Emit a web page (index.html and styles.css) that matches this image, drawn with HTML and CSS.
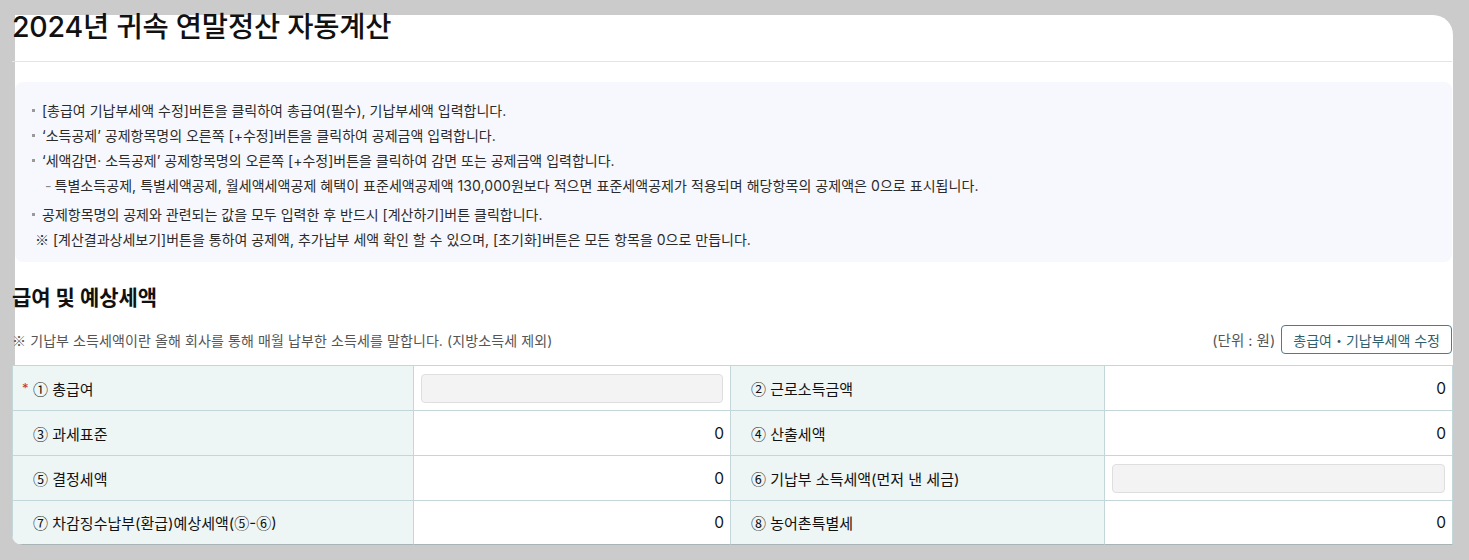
FILE: index.html
```html
<!DOCTYPE html>
<html lang="ko">
<head>
<meta charset="utf-8">
<title>2024년 귀속 연말정산 자동계산</title>
<link rel="stylesheet" href="styles.css">
</head>
<body>
<div class="card">
  <h1 class="title">2024년 귀속 연말정산 자동계산</h1>
  <hr class="rule">
  <div class="info">
    <ul class="guide">
      <li class="b">[총급여 기납부세액 수정]버튼을 클릭하여 총급여(필수), 기납부세액 입력합니다.</li>
      <li class="b">‘소득공제’ 공제항목명의 오른쪽 [+수정]버튼을 클릭하여 공제금액 입력합니다.</li>
      <li class="b">‘세액감면· 소득공제’ 공제항목명의 오른쪽 [+수정]버튼을 클릭하여 감면 또는 공제금액 입력합니다.</li>
      <li class="sub"><span class="dash">-</span>특별소득공제, 특별세액공제, 월세액세액공제 혜택이 표준세액공제액 130,000원보다 적으면 표준세액공제가 적용되며 해당항목의 공제액은 0으로 표시됩니다.</li>
      <li class="b gap">공제항목명의 공제와 관련되는 값을 모두 입력한 후 반드시 [계산하기]버튼 클릭합니다.</li>
      <li class="ref"><span class="sym">※</span> [계산결과상세보기]버튼을 통하여 공제액, 추가납부 세액 확인 할 수 있으며, [초기화]버튼은 모든 항목을 0으로 만듭니다.</li>
    </ul>
  </div>
  <h2 class="section">급여 및 예상세액</h2>
  <div class="toolbar">
    <p class="note"><span class="sym">※</span> 기납부 소득세액이란 올해 회사를 통해 매월 납부한 소득세를 말합니다. (지방소득세 제외)</p>
    <span class="unit">(단위 : 원)</span>
    <button class="edit" type="button">총급여・기납부세액 수정</button>
  </div>
  <div class="grid">
    <div class="cell label"><span class="req">*</span><span class="sym">①</span> 총급여</div>
    <div class="cell field"><div class="input"></div></div>
    <div class="cell label"><span class="sym">②</span> 근로소득금액</div>
    <div class="cell value">0</div>

    <div class="cell label"><span class="sym">③</span> 과세표준</div>
    <div class="cell value">0</div>
    <div class="cell label"><span class="sym">④</span> 산출세액</div>
    <div class="cell value">0</div>

    <div class="cell label"><span class="sym">⑤</span> 결정세액</div>
    <div class="cell value">0</div>
    <div class="cell label"><span class="sym">⑥</span> 기납부 소득세액(먼저 낸 세금)</div>
    <div class="cell field"><div class="input"></div></div>

    <div class="cell label last"><span class="sym">⑦</span> 차감징수납부(환급)예상세액(<span class="sym">⑤</span>-<span class="sym">⑥</span>)</div>
    <div class="cell value last">0</div>
    <div class="cell label last"><span class="sym">⑧</span> 농어촌특별세</div>
    <div class="cell value last">0</div>
  </div>
</div>
</body>
</html>
```
FILE: styles.css
```css
html, body {
  margin: 0;
  padding: 0;
}
body {
  background: #cbcbcb;
  font-family: Inter, "Noto Sans CJK KR", sans-serif;
  color: #111;
}
.sym {
  font-family: "Noto Sans CJK KR", sans-serif;
}
.card {
  margin: 15px 16px 0 15px;
  background: #fff;
  border-radius: 0 20px 0 10px;
}
.title {
  margin: 0 0 0 -3px;
  font-size: 28.5px;
  font-weight: 500;
  line-height: 24px;
  letter-spacing: -0.2px;
  color: #111;
}
.rule {
  margin: 22px 1px 0 -3px;
  border: 0;
  border-top: 1px solid #e4e4e4;
  height: 0;
}
.info {
  margin: 20px 1px 0 0;
  background: #f7f8fd;
  border-radius: 8px;
  padding: 16px 0 10px 27px;
}
.guide {
  list-style: none;
  margin: 0;
  padding: 0;
  font-size: 14px;
  line-height: 25px;
  color: #2b2b2b;
}
.guide .b::before {
  content: "";
  display: inline-block;
  width: 3px;
  height: 3px;
  background: #9a9a9a;
  margin-left: -10px;
  margin-right: 7px;
  vertical-align: 4px;
}
.guide .gap {
  margin-top: 4px;
}
.guide .sub {
  padding-left: 3px;
  letter-spacing: 0.05px;
}
.guide .dash {
  color: #888;
  margin-right: 3px;
}
.guide .ref {
  margin-left: -7px;
}
.section {
  margin: 22px 0 0 -3px;
  font-size: 21px;
  font-weight: 700;
  line-height: 28px;
  color: #111;
}
.toolbar {
  margin: 13px 1px 0 -3px;
  display: flex;
  align-items: center;
  height: 29px;
}
.note {
  margin: 0;
  flex: 1;
  font-size: 14px;
  color: #555;
  letter-spacing: 0.1px;
}
.unit {
  font-size: 14.5px;
  color: #555;
  margin-right: 6px;
}
.edit {
  height: 29px;
  padding: 0 11px;
  background: #fff;
  border: 1px solid #4a7e8c;
  border-radius: 4px;
  color: #2f5f6d;
  font-family: inherit;
  font-size: 14px;
}
.grid {
  margin: 11px 0 0 -3px;
  display: grid;
  grid-template-columns: 402px 317px 374px 348px;
  grid-template-rows: 45px 45px 45px 44px;
  border-top: 1px solid #c3d7db;
  border-bottom-left-radius: 10px;
  overflow: hidden;
}
.cell {
  box-sizing: border-box;
  border-right: 1px solid #c3d7db;
  border-bottom: 1px solid #c3d7db;
  display: flex;
  align-items: center;
  font-size: 15px;
  color: #111;
  white-space: pre;
}
.cell:nth-child(4n+1) {
  border-left: 1px solid #c3d7db;
}
.cell.last {
  border-bottom-color: #a9b4b7;
}
.label {
  background: #eef6f5;
  padding-left: 20px;
}
.req {
  display: inline-block;
  width: 11px;
  margin-left: -11px;
  color: #c8323c;
  font-size: 13px;
}
.value {
  justify-content: flex-end;
  padding-right: 6px;
  font-size: 15.5px;
}
.field {
  padding: 0 7px;
}
.input {
  flex: 1;
  height: 29px;
  box-sizing: border-box;
  background: #f3f3f3;
  border: 1px solid #dedede;
  border-radius: 4px;
}
```
